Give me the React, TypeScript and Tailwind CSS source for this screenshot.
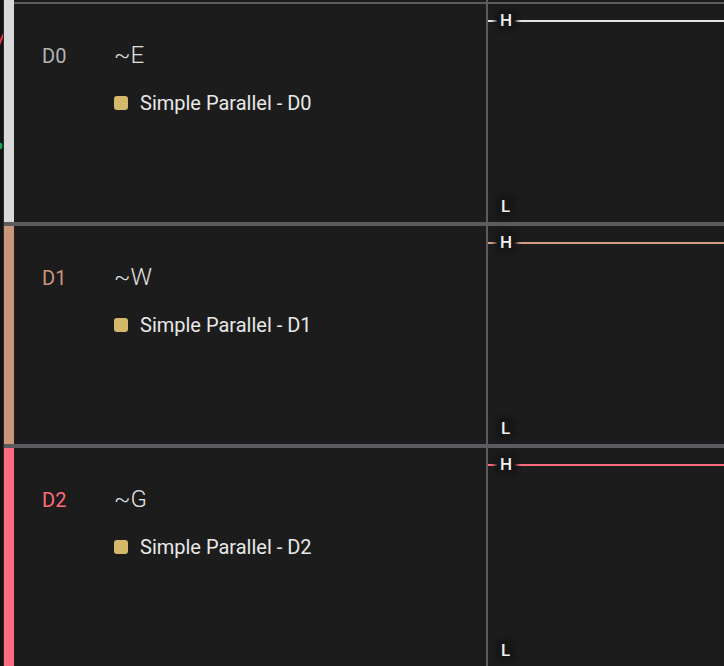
import React from "react";

// 채널 데이터
interface Channel {
  id: string;
  name: string;
  source: string;
  barColor: string;
  labelColor: string;
  lineColor: string;
}

const channels: Channel[] = [
  {
    id: "D0",
    name: "~E",
    source: "Simple Parallel - D0",
    barColor: "bg-[#d9d9d9]",
    labelColor: "text-[#b4b4b4]",
    lineColor: "bg-[#e4e4e4]",
  },
  {
    id: "D1",
    name: "~W",
    source: "Simple Parallel - D1",
    barColor: "bg-[#c9977c]",
    labelColor: "text-[#c9977c]",
    lineColor: "bg-[#d49f84]",
  },
  {
    id: "D2",
    name: "~G",
    source: "Simple Parallel - D2",
    barColor: "bg-[#ff6b7f]",
    labelColor: "text-[#ff6b7f]",
    lineColor: "bg-[#ff6b7f]",
  },
];

function LevelTag({ children }: { children: React.ReactNode }) {
  return (
    <span className="block px-[3px] rounded-[4px] bg-[#161616] shadow-[0_0_4px_2px_#161616] text-[17px] leading-[18px] font-medium text-[#f2f2f2]">
      {children}
    </span>
  );
}

function ChannelRow({ ch, first }: { ch: Channel; first: boolean }) {
  return (
    <div className="flex flex-col">
      {/* 구분선 */}
      {!first && <div className="h-[4px] bg-[#5b5b60]" />}
      <div className={`flex ${first ? "h-[222px]" : "h-[218px]"}`}>
        {/* 색상 바 */}
        <div className={`w-[10px] flex-none ${ch.barColor}`} />

        {/* 채널 정보 */}
        <div className="w-[472px] flex-none flex flex-col">
          {first && <div className="h-[4px] border-t-2 border-t-[#1c1c1c] bg-[#5b5b60]" />}
          <div className="pl-[28px] pt-[39px]">
            <div className="flex items-baseline">
              <span className={`w-[72px] text-[20px] leading-[20px] ${ch.labelColor}`}>{ch.id}</span>
              <span className="text-[24px] leading-[24px] font-light text-[#e0e0e0]">{ch.name}</span>
            </div>
            <div className="ml-[72px] mt-[26px] flex items-center gap-[12px]">
              <span className="w-[14px] h-[14px] rounded-[3px] bg-[#d4b96c]" />
              <span className="text-[20px] leading-[20px] text-[#e8e8e8]">{ch.source}</span>
            </div>
          </div>
        </div>

        {/* 세로 구분선 */}
        <div className="w-[2px] flex-none bg-[#5b5b60]" />

        {/* 파형 영역 */}
        <div className="flex-1 flex flex-col">
          {first && <div className="h-[4px] border-t-2 border-t-[#1c1c1c] bg-[#5b5b60]" />}
          <div className="relative flex-1">
            <div className={`absolute left-0 right-0 top-[16px] h-[2px] ${ch.lineColor}`} />
            <div className="absolute left-[9px] top-[7px]">
              <LevelTag>H</LevelTag>
            </div>
            <div className="absolute left-[10px] bottom-[7px]">
              <LevelTag>L</LevelTag>
            </div>
          </div>
        </div>
      </div>
    </div>
  );
}

export default function App() {
  return (
    <div
      className="w-[724px] h-[666px] overflow-hidden flex bg-[#1c1c1c]"
      style={{ fontFamily: "Roboto, 'Noto Sans', sans-serif" }}
    >
      {/* 왼쪽 가장자리 */}
      <div className="relative w-[4px] flex-none bg-[#131313] border-r border-r-[#2c2c2c]">
        <svg className="absolute left-0 top-0" width="4" height="200" viewBox="0 0 4 200">
          <path d="M-2 50 L3 38 L3 33 L-2 44 Z" fill="#e0364a" />
          <circle cx="-1" cy="146" r="3.5" fill="#1fa35a" />
        </svg>
      </div>

      <div className="flex-1 flex flex-col">
        {channels.map((ch, i) => (
          <ChannelRow key={ch.id} ch={ch} first={i === 0} />
        ))}
      </div>
    </div>
  );
}
